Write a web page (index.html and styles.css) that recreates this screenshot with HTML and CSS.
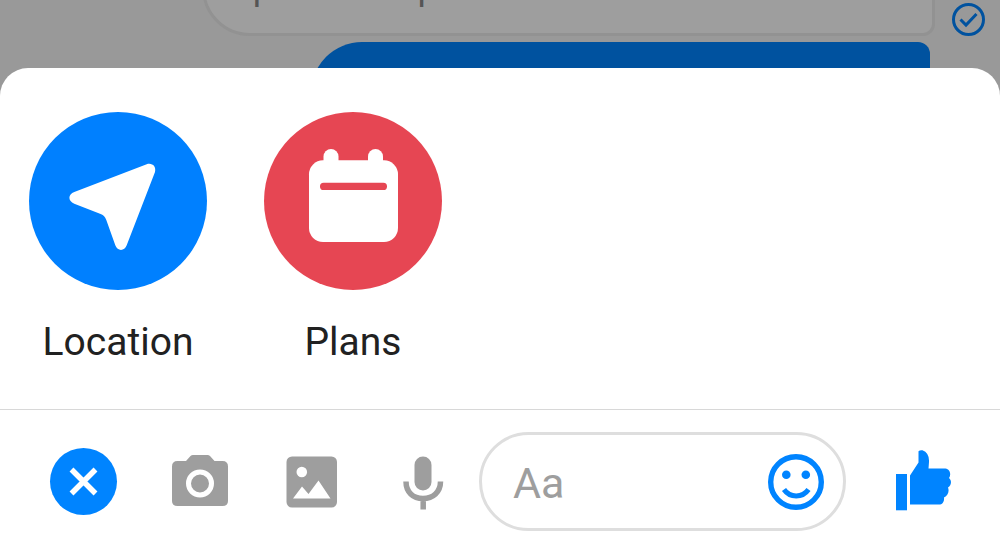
FILE: index.html
```
<!DOCTYPE html>
<html lang="en">
<head>
    <meta charset="UTF-8">
    <meta name="viewport" content="width=device-width, initial-scale=1.0">
    <title>Messenger</title>
    <link rel="stylesheet" href="styles.css">
</head>
<body>

    <div class="chat">
        <div class="message received">uploads help</div>
        <div class="message sent"></div>
        <svg class="status" viewBox="0 0 34 34" role="img" aria-label="Sent">
            <circle cx="17.500" cy="17.500" r="15" fill="none" stroke="#00529f" stroke-width="3"/>
            <path d="M9.500 17.500l5.500 5.500L25.500 12" fill="none" stroke="#00529f" stroke-width="3"/>
        </svg>
    </div>

    <main class="sheet">
        <div class="actions">
            <button type="button" class="action">
                <svg viewBox="0 0 178 178" aria-hidden="true">
                    <circle cx="89" cy="89" r="89" fill="#0080ff"/>
                    <path fill="#fff" d="M45.300 80L117.700 52.300C123 50.500 127.500 54.500 126 60L97.700 133.300C95.500 139.500 88.500 139.500 86.300 133.300L77.300 108C76 104.500 74.500 103 71 101.700L45.300 91.700C38.800 89 38.800 82.500 45.300 80Z"/>
                </svg>
                <span>Location</span>
            </button>
            <button type="button" class="action">
                <svg viewBox="0 0 178 178" aria-hidden="true">
                    <circle cx="89" cy="89" r="89" fill="#e64653"/>
                    <rect x="45" y="48.300" width="89" height="81.700" rx="14" fill="#fff"/>
                    <rect x="59.500" y="37" width="15" height="24" rx="7.500" fill="#fff"/>
                    <rect x="104" y="37" width="15" height="24" rx="7.500" fill="#fff"/>
                    <rect x="56" y="70.700" width="67" height="7.300" rx="3.600" fill="#e64653"/>
                </svg>
                <span>Plans</span>
            </button>
        </div>

        <form class="toolbar">
            <div class="tools">
                <button type="button" class="close" aria-label="Close">
                    <svg viewBox="0 0 67 67" aria-hidden="true">
                        <path d="M21.500 21.500l24 24M45.500 21.500l-24 24" stroke="#fff" stroke-width="5.500"/>
                    </svg>
                </button>
                <button type="button" class="tool" aria-label="Camera">
                    <svg viewBox="0 0 56 56" aria-hidden="true">
                        <path fill="#9e9e9e" d="M5.500 7H14L18.500 2Q19.500 1 21 1H35.500Q37 1 38 2L42.500 7H50.500Q56 7 56 12.500V47Q56 52 50.500 52H5.500Q0 52 0 47V12.500Q0 7 5.500 7Z"/>
                        <circle cx="28" cy="29.500" r="11.500" fill="#9e9e9e" stroke="#fff" stroke-width="5"/>
                    </svg>
                </button>
                <button type="button" class="tool" aria-label="Photos">
                    <svg viewBox="0 0 56 56" aria-hidden="true">
                        <rect x="3.500" y="2.500" width="50.500" height="51" rx="5.500" fill="#9e9e9e"/>
                        <circle cx="18.800" cy="18" r="5.300" fill="#fff"/>
                        <path fill="#fff" d="M10 44.500L19 32.500L25.500 40L35.500 26.500L47.500 44.500Z"/>
                    </svg>
                </button>
                <button type="button" class="tool" aria-label="Voice message">
                    <svg viewBox="0 0 56 56" aria-hidden="true">
                        <rect x="20.500" y="2.500" width="17" height="34" rx="8.500" fill="#9e9e9e"/>
                        <path d="M12 27.500C12 38 19 44.500 29 44.500S46.500 38 46.500 27.500M29.200 44V55.500" fill="none" stroke="#9e9e9e" stroke-width="5.500"/>
                    </svg>
                </button>
            </div>

            <div class="composer">
                <input type="text" placeholder="Aa" aria-label="Message">
                <button type="button" class="emoji" aria-label="Emoji">
                    <svg viewBox="0 0 56 56" aria-hidden="true">
                        <circle cx="28" cy="28" r="25.300" fill="none" stroke="#0084ff" stroke-width="5.400"/>
                        <circle cx="18.300" cy="20.700" r="4.300" fill="#0084ff"/>
                        <circle cx="37.800" cy="20.700" r="4.300" fill="#0084ff"/>
                        <path d="M16 35.500Q20.500 42 28.200 42T40.500 35.500" fill="none" stroke="#0084ff" stroke-width="5"/>
                    </svg>
                </button>
            </div>

            <button type="button" class="like" aria-label="Like">
                <svg viewBox="-1 0 56 64" aria-hidden="true">
                    <path fill="#0084ff" d="M0 24H11V60.300H0Z"/>
                    <path fill="#0084ff" d="M14 54.600V25.500L22.500 12.500V1.200Q24 -.100 26.500 .300Q33.500 3 33 12L32.500 18.500H49.500C54 19 55.500 24.500 53 28C56 30.500 55.500 35 52 37.500C53.500 41.500 52 45.500 48 47.500C48.500 51.500 46.500 54.600 43 54.600Z"/>
                </svg>
            </button>
        </form>
    </main>

</body>
</html>
```
FILE: styles.css
```
* {
    margin: 0;
    padding: 0;
    box-sizing: border-box;
    font-family: Roboto, "Liberation Sans", sans-serif;
}

body {
    display: flex;
    flex-direction: column;
    min-height: 100vh;
    background: #999;
}

button {
    border: none;
    background: none;
    cursor: pointer;
}

svg {
    display: block;
    width: 100%;
}

/* dimmed conversation behind the sheet */
.chat {
    position: relative;
    display: flex;
    flex-direction: column;
    justify-content: flex-end;
    gap: 6px;
    height: 68px;
    overflow: hidden;
}

.message {
    flex-shrink: 0;
    font-size: 36px;
    line-height: 44px;
}

.received {
    margin: 0 65px 0 202px;
    padding: 24px 28px;
    border: 3px solid #929292;
    border-radius: 48px 12px 12px 48px;
    background: #9e9e9e;
    color: #555;
}

.sent {
    min-height: 60px;
    margin: 0 70px -34px 311px;
    border-radius: 51px 12px 0 0;
    background: #00529f;
}

.status {
    position: absolute;
    top: 2px;
    right: 15px;
    width: 34px;
}

.sheet {
    flex: 1;
    border-radius: 28px 28px 0 0;
    background: #fff;
}

.actions {
    display: flex;
    gap: 57px;
    padding: 44px 29px;
    border-bottom: 1px solid #d8d8d8;
}

.action {
    display: flex;
    flex-direction: column;
    align-items: center;
    gap: 29px;
    width: 178px;
    color: #212121;
    font-size: 39px;
    line-height: 46px;
}

.toolbar {
    display: flex;
    align-items: center;
    padding: 22px 49px 8px 50px;
}

.tools {
    display: flex;
    align-items: center;
    gap: 55px;
}

.close {
    width: 67px;
    border-radius: 50%;
    background: #0084ff;
}

.tool, .emoji, .like {
    flex-shrink: 0;
    width: 56px;
}

.composer {
    display: flex;
    flex: 1;
    align-items: center;
    min-width: 0;
    height: 99px;
    margin: 0 49px 0 29px;
    padding: 0 19px 0 31px;
    border: 3px solid #dedede;
    border-radius: 50px;
}

.composer input {
    flex: 1;
    min-width: 0;
    padding-top: 2px;
    border: none;
    outline: none;
    background: none;
    color: #212121;
    font-size: 43px;
    line-height: 52px;
}

.composer input::placeholder {
    color: #9e9e9e;
}
```
